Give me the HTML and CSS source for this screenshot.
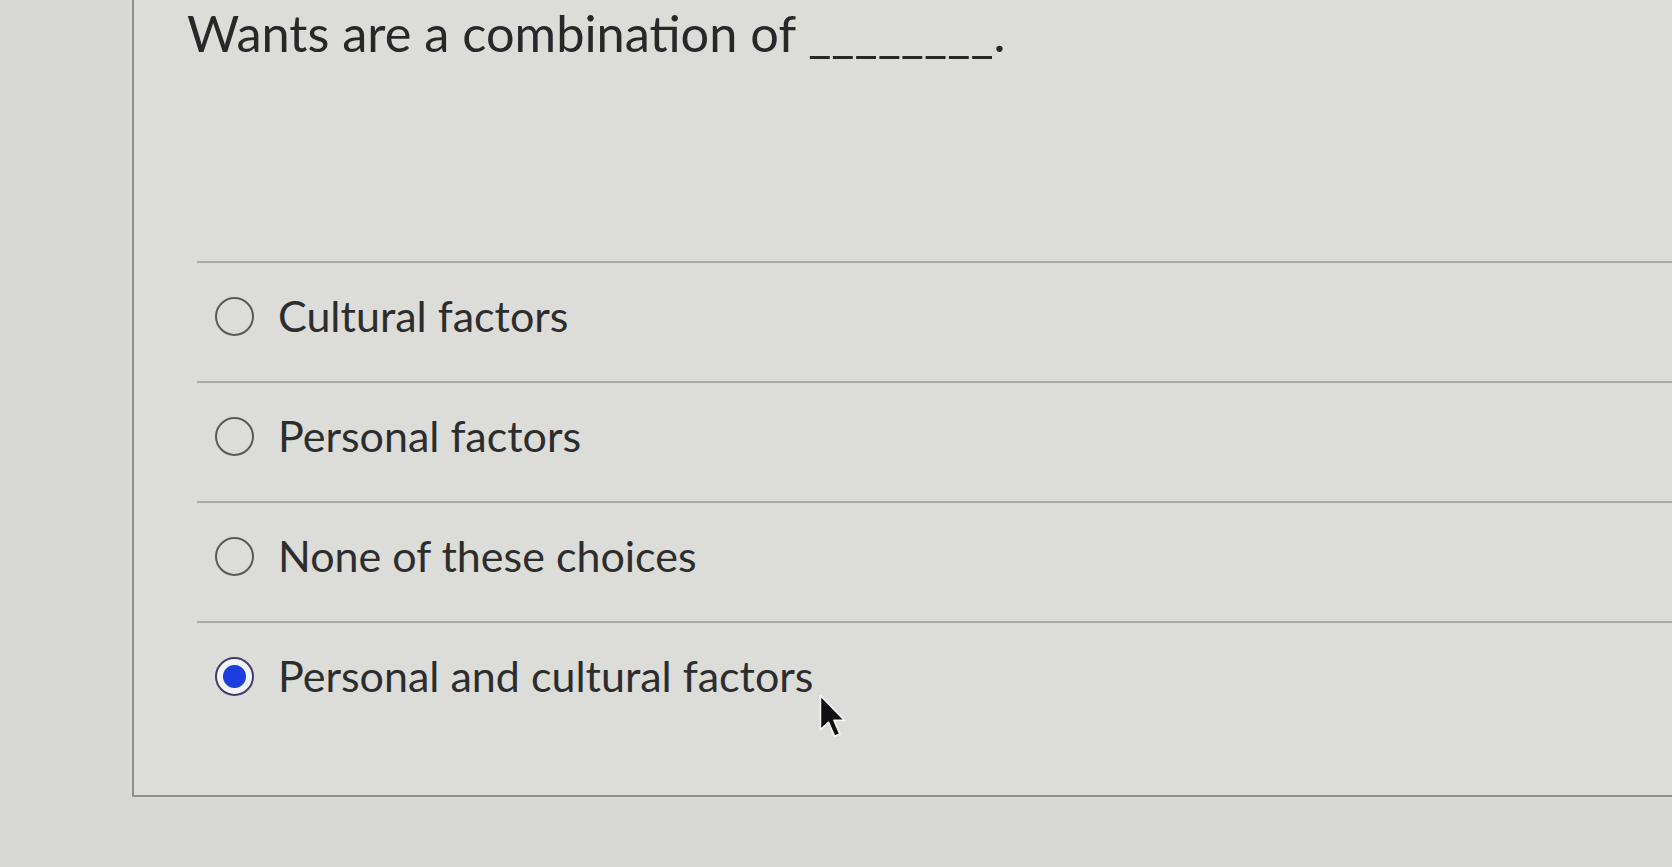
FILE: index.html
```html
<!DOCTYPE html>
<html lang="en">
<head>
<meta charset="utf-8">
<title>Quiz question</title>
<link rel="stylesheet" href="styles.css">
</head>
<body>
<div class="page">
  <div class="gutter"></div>
  <div class="panel">
    <h1 class="question">Wants are a combination of <span class="blank">________</span>.</h1>
    <ul class="answers">
      <li class="answer"><span class="radio"></span><span class="label">Cultural factors</span></li>
      <li class="answer"><span class="radio"></span><span class="label">Personal factors</span></li>
      <li class="answer"><span class="radio"></span><span class="label">None of these choices</span></li>
      <li class="answer last"><span class="radio checked"></span><span class="label">Personal and cultural factors</span></li>
    </ul>
  </div>
</div>
<svg class="cursor" width="27" height="45" viewBox="0 0 12 20" aria-hidden="true">
  <path d="M0.6 0.6 L0.6 16 L4.2 12.6 L6.9 18.8 L9.3 17.8 L6.7 11.7 L11.4 11.7 Z" fill="#111" stroke="#f4f4f4" stroke-width="0.8" stroke-linejoin="round"/>
</svg>
</body>
</html>
```

FILE: styles.css
```css
html, body {
  margin: 0;
  padding: 0;
}

body {
  background: #d8d8d4;
  font-family: Lato, "Open Sans", "Liberation Sans", sans-serif;
  color: #2b2b2c;
  overflow: hidden;
  position: relative;
  width: 1672px;
  height: 867px;
}

.page {
  display: flex;
  height: 867px;
  align-items: flex-start;
}

.gutter {
  width: 132px;
  flex: none;
}

.panel {
  flex: 1;
  height: 795px;
  background: #dcdcd8;
  border-left: 2px solid #8f8f8b;
  border-bottom: 2px solid #8f8f8b;
  display: flex;
  flex-direction: column;
}

.question {
  margin: 0 0 200px 53px;
  padding-top: 5px;
  font-size: 50.5px;
  font-weight: 400;
  line-height: 56px;
  color: #28282a;
  white-space: nowrap;
}

.answers {
  list-style: none;
  margin: 0 0 0 63px;
  padding: 0;
}

.answer {
  display: flex;
  align-items: center;
  border-top: 2px solid #a9a9a5;
  height: 106px;
  padding: 0 0 12px 18px;
}

.radio {
  flex: none;
  width: 39px;
  height: 39px;
  box-sizing: border-box;
  border-radius: 50%;
  border: 2.5px solid #59595b;
  background: transparent;
}

.radio.checked {
  border: 2.5px solid #3d3d6e;
  background: radial-gradient(circle, #1c3de0 0, #1c3de0 11px, #f4f4f6 12px, #f4f4f6 100%);
}

.label {
  margin-left: 24px;
  font-size: 43px;
  line-height: 52px;
  color: #2d2d2e;
  white-space: nowrap;
}

.cursor {
  position: absolute;
  left: 819px;
  top: 694px;
}
```
